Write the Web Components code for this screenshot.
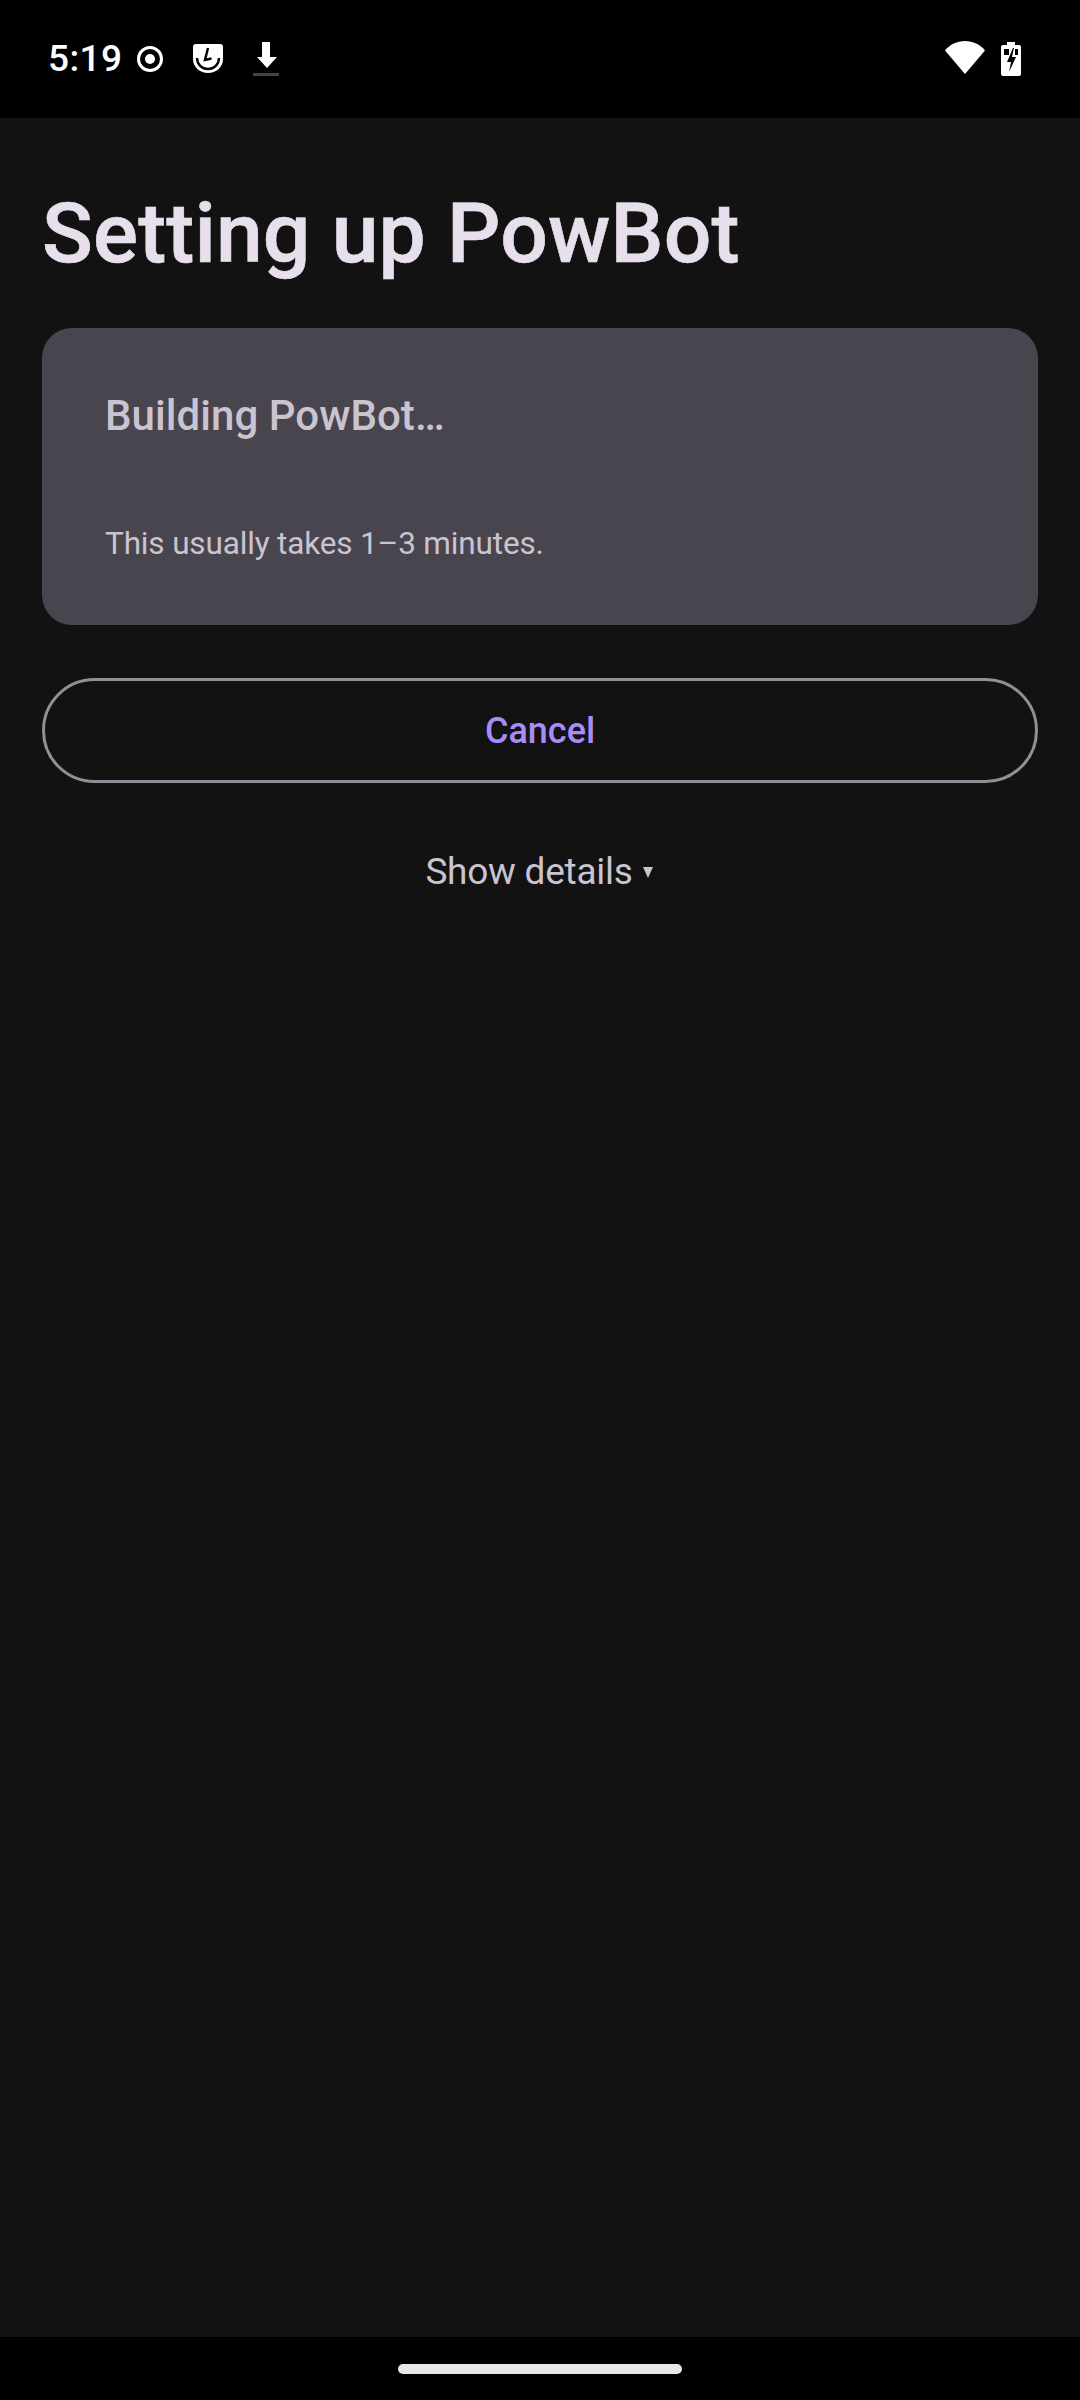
<!DOCTYPE html>
<html>
<head>
<meta charset="utf-8">
<style>
  html, body { margin: 0; height: 100%; background: #121212; }
  body { font-family: Roboto, "Noto Sans", sans-serif; }
</style>
</head>
<body>
<setup-screen>
  <status-bar slot="status" time="5:19"></status-bar>
  <h-title slot="title">Setting up PowBot</h-title>
  <build-card slot="card" heading="Building PowBot…">This usually takes 1–3 minutes.</build-card>
  <pill-button slot="action">Cancel</pill-button>
  <details-toggle slot="details">Show details</details-toggle>
  <nav-bar slot="nav"></nav-bar>
</setup-screen>

<script>
class SetupScreen extends HTMLElement {
  constructor() {
    super();
    this.attachShadow({ mode: "open" });
    this.shadowRoot.innerHTML = /* html */`
    <style>
      :host { display: flex; flex-direction: column; height: 2400px; background: #121212; }
      main { flex: 1; display: flex; flex-direction: column; padding: 0 42px; }
    </style>
    <slot name="status"></slot>
    <main>
      <slot name="title"></slot>
      <slot name="card"></slot>
      <slot name="action"></slot>
      <slot name="details"></slot>
    </main>
    <slot name="nav"></slot>`;
  }
}

class StatusBar extends HTMLElement {
  constructor() {
    super();
    this.attachShadow({ mode: "open" });
  }

  connectedCallback() {
    this.shadowRoot.innerHTML = /* html */`
    <style>
      :host { display: flex; align-items: center; height: 118px; background: #000; color: #fff; padding: 0 59px 0 48px; box-sizing: border-box; }
      .time { font-size: 37px; font-weight: 500; line-height: 118px; width: 73px; letter-spacing: 0.4px; }
      .left { display: flex; align-items: center; flex: 1; }
      svg { display: block; fill: #fff; }
      .rec { margin-left: 14px; }
      .clock { margin-left: 27px; }
      .down { margin-left: 29px; }
      .wifi { margin-right: 16px; }
    </style>
    <div class="left">
      <span class="time">${this.getAttribute("time")}</span>
      <svg class="rec" width="30" height="30" viewBox="0 0 30 30">
        <circle cx="15" cy="15" r="11.5" fill="none" stroke="#fff" stroke-width="3"/>
        <circle cx="15" cy="15" r="5"/>
      </svg>
      <svg class="clock" width="32" height="32" viewBox="0 0 32 32">
        <path d="M4 1h24a3 3 0 0 1 3 3v12a15 14 0 0 1-30 0V4a3 3 0 0 1 3-3z"/>
        <path d="M5 15a11 11 0 0 0 22 0" fill="none" stroke="#000" stroke-width="2.4"/>
        <path d="M16 5l-3 12 6.500-1.500" fill="none" stroke="#000" stroke-width="2.4"/>
      </svg>
      <svg class="down" width="26" height="36" viewBox="0 0 26 36">
        <path d="M9 1h8v15h7L14 27 4 16h5z"/>
        <rect y="32" width="26" height="3" fill="#444"/>
      </svg>
    </div>
    <svg class="wifi" width="40" height="33" viewBox="0 0 40 33" style="margin-top:-3px">
      <path d="M0 9.500C5 3.500 12 0 20 0s15 3.500 20 9.500L20 33z"/>
    </svg>
    <svg width="20" height="34" viewBox="0 0 20 34" style="margin-top:-1px">
      <path fill-rule="evenodd" d="M6 0h8v3h4a2 2 0 0 1 2 2v27a2 2 0 0 1-2 2H2a2 2 0 0 1-2-2V5a2 2 0 0 1 2-2h4zM3 7v6h5V7zM14 7v6h3V7zM12 6L6 20h4l-2 10 7-15h-4l2-9z"/>
    </svg>`;
  }
}

class HTitle extends HTMLElement {
  constructor() {
    super();
    this.attachShadow({ mode: "open" });
    this.shadowRoot.innerHTML = /* html */`
    <style>
      :host { display: block; color: #e7e0ec; font-size: 84px; font-weight: 500; line-height: 98px; padding: 67px 0 45px; letter-spacing: 0.15px; -webkit-text-stroke: 0.6px #e7e0ec; }
    </style>
    <slot></slot>`;
  }
}

class BuildCard extends HTMLElement {
  constructor() {
    super();
    this.attachShadow({ mode: "open" });
  }

  connectedCallback() {
    this.shadowRoot.innerHTML = /* html */`
    <style>
      :host { display: block; background: #49454f; border-radius: 30px; padding: 58px 63px 0; height: 297px; box-sizing: border-box; color: #cac4d0; }
      .head { font-size: 42px; font-weight: 500; line-height: 60px; margin-bottom: 75px; letter-spacing: 0.05px; }
      .sub { font-size: 31.500px; line-height: 45px; letter-spacing: -0.15px; }
    </style>
    <div class="head">${this.getAttribute("heading")}</div>
    <div class="sub"><slot></slot></div>`;
  }
}

class PillButton extends HTMLElement {
  constructor() {
    super();
    this.attachShadow({ mode: "open" });
    this.shadowRoot.innerHTML = /* html */`
    <style>
      :host { display: flex; align-items: center; justify-content: center; height: 105px; margin-top: 53px; box-sizing: border-box; border: 3px solid #938f99; border-radius: 53px; color: #a98cf7; font-size: 36px; font-weight: 500; }
    </style>
    <slot></slot>`;
  }
}

class DetailsToggle extends HTMLElement {
  constructor() {
    super();
    this.attachShadow({ mode: "open" });
    this.shadowRoot.innerHTML = /* html */`
    <style>
      :host { display: flex; align-items: center; justify-content: center; gap: 10px; margin-top: 63px; height: 50px; padding-right: 2px; color: #cac4d0; font-size: 37px; letter-spacing: -0.25px; }
      i { width: 0; height: 0; margin-top: 3px; border-left: 5.500px solid transparent; border-right: 5.500px solid transparent; border-top: 11px solid #cac4d0; }
    </style>
    <slot></slot><i></i>`;
  }
}

class NavBar extends HTMLElement {
  constructor() {
    super();
    this.attachShadow({ mode: "open" });
    this.shadowRoot.innerHTML = /* html */`
    <style>
      :host { display: flex; align-items: flex-start; justify-content: center; height: 63px; padding-top: 27px; box-sizing: border-box; background: #000; }
      div { width: 284px; height: 10px; border-radius: 5px; background: #e8e8e8; }
    </style>
    <div></div>`;
  }
}

customElements.define("setup-screen", SetupScreen);
customElements.define("status-bar", StatusBar);
customElements.define("h-title", HTitle);
customElements.define("build-card", BuildCard);
customElements.define("pill-button", PillButton);
customElements.define("details-toggle", DetailsToggle);
customElements.define("nav-bar", NavBar);
</script>
</body>
</html>
